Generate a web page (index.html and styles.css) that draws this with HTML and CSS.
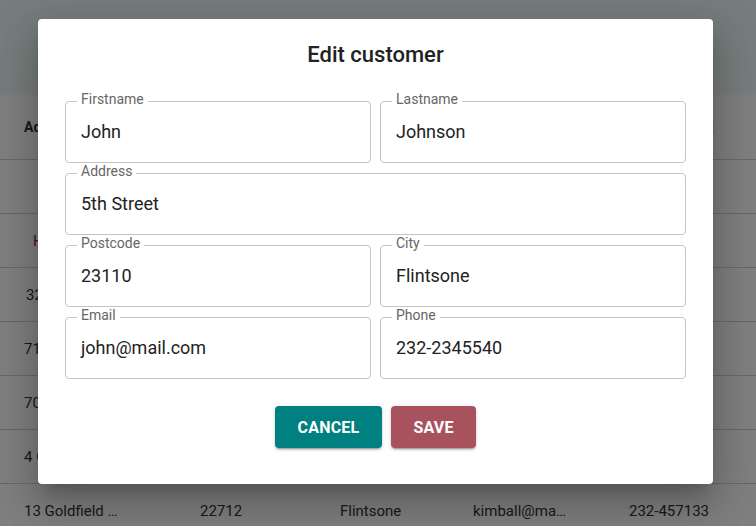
FILE: index.html
```html
<!DOCTYPE html>
<html lang="en">
<head>
<meta charset="utf-8">
<title>Edit customer</title>
<link rel="stylesheet" href="styles.css">
</head>
<body>
<div class="page">
  <header class="appbar"></header>
  <div class="table">
    <div class="row head"><span class="c1">Address</span><span class="c2">Postcode</span><span class="c3">City</span><span class="c4">Email</span><span class="c5">Phone</span><span class="menu">⋮</span></div>
    <div class="row"></div>
    <div class="row"><span class="c1 link">Hide</span></div>
    <div class="row"><span class="c1 s">32 Baker St</span><span class="c2">23110</span><span class="c3">Flintsone</span><span class="c4">anna@mail.com</span><span class="c5">232-345554</span></div>
    <div class="row"><span class="c1">71 Ocean Dr</span><span class="c2">23110</span><span class="c3">Flintsone</span><span class="c4">mark@mail.com</span><span class="c5">232-345123</span></div>
    <div class="row"><span class="c1">70 Hill Rd</span><span class="c2">23110</span><span class="c3">Flintsone</span><span class="c4">lisa@mail.com</span><span class="c5">232-123456</span></div>
    <div class="row"><span class="c1">4 Green St</span><span class="c2">23110</span><span class="c3">Flintsone</span><span class="c4">paul@mail.com</span><span class="c5">232-654321</span></div>
    <div class="row"><span class="c1">13 Goldfield …</span><span class="c2">22712</span><span class="c3">Flintsone</span><span class="c4">kimball@ma…</span><span class="c5">232-457133</span></div>
  </div>
</div>
<div class="backdrop"></div>
<div class="dialog">
  <h2 class="title">Edit customer</h2>
  <div class="form">
    <div class="field"><label>Firstname</label><span class="value">John</span></div>
    <div class="field"><label>Lastname</label><span class="value">Johnson</span></div>
    <div class="field wide"><label>Address</label><span class="value">5th Street</span></div>
    <div class="field"><label>Postcode</label><span class="value">23110</span></div>
    <div class="field"><label>City</label><span class="value">Flintsone</span></div>
    <div class="field"><label>Email</label><span class="value">john@mail.com</span></div>
    <div class="field"><label>Phone</label><span class="value">232-2345540</span></div>
  </div>
  <div class="actions">
    <button class="btn cancel">Cancel</button>
    <button class="btn save">Save</button>
  </div>
</div>
</body>
</html>
```

FILE: styles.css
```css
* { box-sizing: border-box; }
html, body { margin: 0; padding: 0; }
body {
  width: 756px;
  height: 526px;
  overflow: hidden;
  font-family: Roboto, "Liberation Sans", sans-serif;
  background: #fff;
  position: relative;
}
.page { width: 756px; }
.appbar {
  height: 95px;
  background: #eefaf8;
}
.table { background: #fff; }
.row {
  position: relative;
  height: 54px;
  border-bottom: 1px solid #d0d0d0;
  display: flex;
  align-items: center;
  font-size: 15px;
  color: #333;
}
.row.head { height: 65px; font-weight: 700; font-size: 14px; }
.row span { position: absolute; white-space: nowrap; }
.c1 { left: 24px; }
.c1.s { left: 26px; }
.c1.link { left: 33px; color: #8a3a1a; }
.c2 { left: 200px; }
.c3 { left: 340px; }
.c4 { left: 473px; }
.c5 { left: 629px; }
.menu { left: 705px; }
.backdrop {
  position: absolute;
  inset: 0;
  background: rgba(0, 0, 0, 0.5);
}
.dialog {
  position: absolute;
  left: 38px;
  top: 19px;
  width: 675px;
  height: 465px;
  background: #fff;
  border-radius: 4px;
  padding: 0 27px;
  box-shadow: 0 11px 15px -7px rgba(0,0,0,0.2), 0 24px 38px 3px rgba(0,0,0,0.14), 0 9px 46px 8px rgba(0,0,0,0.12);
}
.title {
  margin: 0;
  padding-top: 22px;
  height: 82px;
  text-align: center;
  font-size: 22px;
  font-weight: 500;
  line-height: 28px;
  color: #222;
}
.form {
  display: grid;
  grid-template-columns: 1fr 1fr;
  column-gap: 9px;
  row-gap: 10px;
}
.field {
  position: relative;
  height: 62px;
  border: 1px solid #c4c4c4;
  border-radius: 4px;
  display: flex;
  align-items: center;
  padding: 0 15px 2px;
}
.field.wide { grid-column: 1 / span 2; }
.field label {
  position: absolute;
  top: -11px;
  left: 11px;
  padding: 0 4px;
  background: #fff;
  font-size: 14px;
  line-height: 16px;
  color: #666;
}
.value {
  font-size: 18px;
  color: #222;
}
.actions {
  display: flex;
  justify-content: center;
  gap: 9px;
  margin-top: 27px;
}
.btn {
  height: 42px;
  border: 0;
  border-radius: 4px;
  color: #fff;
  font-family: Roboto, "Liberation Sans", sans-serif;
  font-size: 16px;
  font-weight: 700;
  text-transform: uppercase;
  letter-spacing: 0.2px;
  box-shadow: 0 3px 1px -2px rgba(0,0,0,0.2), 0 2px 2px 0 rgba(0,0,0,0.14), 0 1px 5px 0 rgba(0,0,0,0.12);
}
.cancel { width: 107px; background: #008080; }
.save { width: 85px; background: #a8525e; }
```
